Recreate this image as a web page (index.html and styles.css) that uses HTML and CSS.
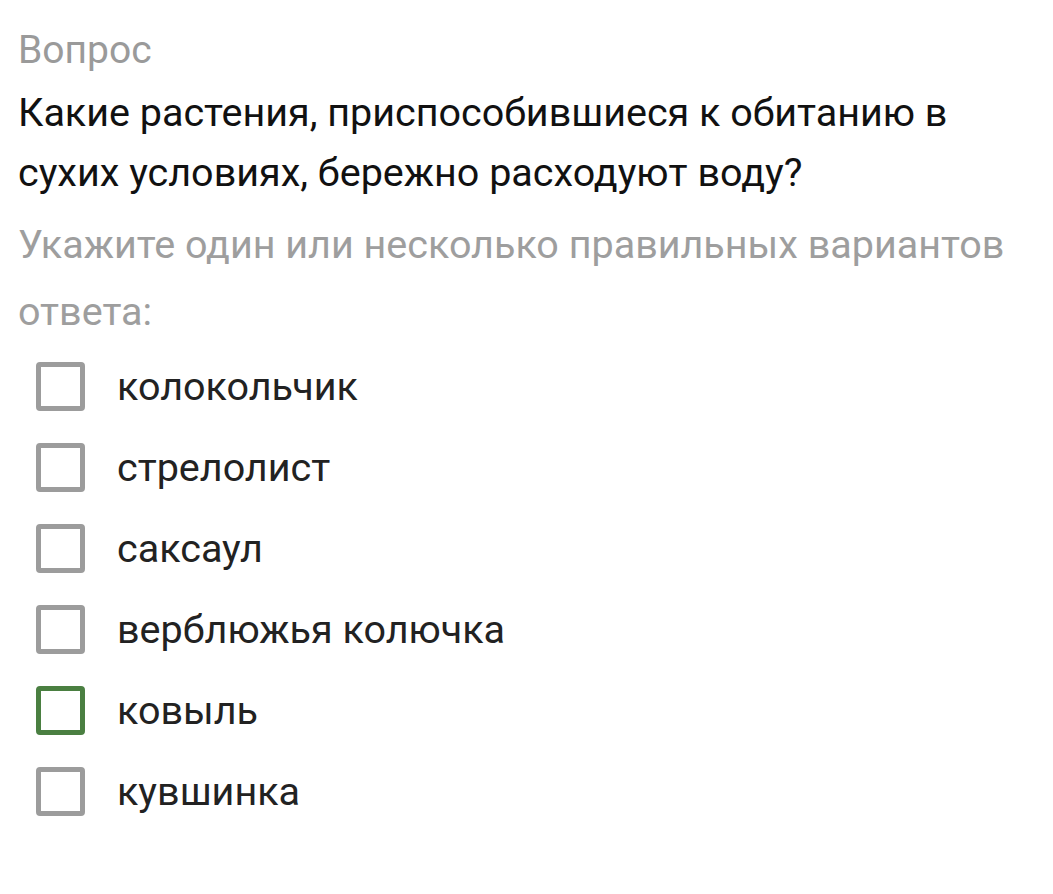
FILE: index.html
```html
<!DOCTYPE html>
<html lang="ru">
<head>
    <meta charset="UTF-8">
    <meta name="viewport" content="width=device-width, initial-scale=1.0">
    <title>Вопрос</title>
    <link rel="stylesheet" href="styles.css">
</head>
<body>
    <div class="quiz">
        <div class="label">Вопрос</div>
        <div class="question">Какие растения, приспособившиеся к обитанию в сухих условиях, бережно расходуют воду?</div>
        <div class="hint">Укажите один или несколько правильных вариантов ответа:</div>

        <ul class="options">
            <li class="option"><span class="box"></span>колокольчик</li>
            <li class="option"><span class="box"></span>стрелолист</li>
            <li class="option"><span class="box"></span>саксаул</li>
            <li class="option"><span class="box"></span>верблюжья колючка</li>
            <li class="option"><span class="box selected"></span>ковыль</li>
            <li class="option"><span class="box"></span>кувшинка</li>
        </ul>
    </div>
</body>
</html>
```

FILE: styles.css
```css
body {
    margin: 0;
    background: #fff;
    font-family: Roboto, "Noto Sans", sans-serif;
}
.quiz {
    padding: 25px 18px 0 18px;
    width: 1000px;
}
.label {
    font-size: 39px;
    line-height: 50px;
    color: #9a9a9a;
}
.question {
    font-size: 39.5px;
    line-height: 60px;
    color: #111;
    margin-top: 8px;
}
.hint {
    font-size: 39.5px;
    line-height: 67px;
    color: #9e9e9e;
    margin-top: 8px;
}
.options {
    list-style: none;
    margin: 1px 0 0 0;
    padding: 0 0 0 18px;
}
.option {
    display: flex;
    align-items: center;
    height: 81px;
    font-size: 39.5px;
    color: #222;
}
.box {
    width: 39px;
    height: 39px;
    border: 5px solid #9c9c9c;
    border-radius: 4px;
    margin-right: 32px;
    flex: none;
}
.box.selected {
    border-color: #4a7f41;
}
```
